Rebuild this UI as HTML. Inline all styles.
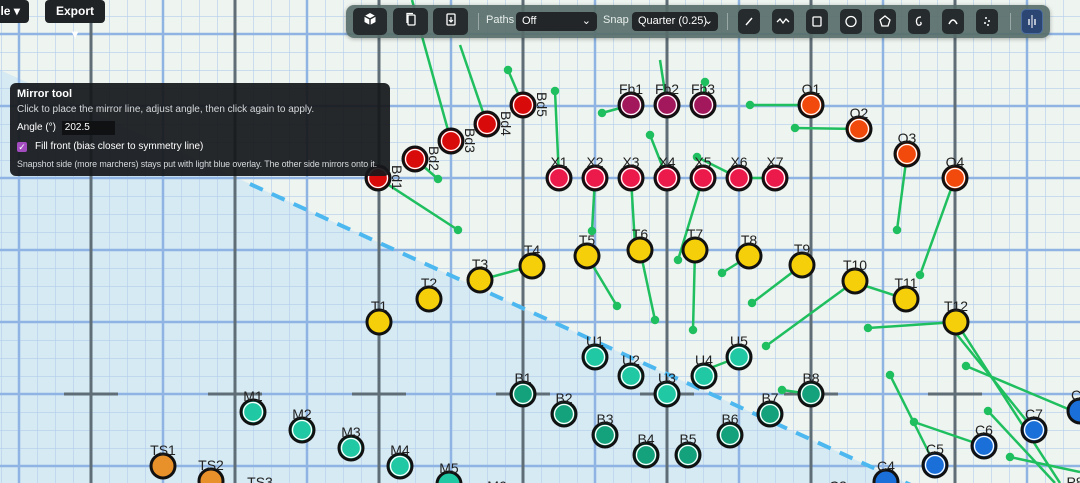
<!DOCTYPE html>
<html style="overflow:hidden"><head><meta charset="utf-8"><style>
*{box-sizing:border-box;margin:0;padding:0}
html,body{width:1080px;height:483px;overflow:hidden}
body{background:#eef4ef;font-family:"Liberation Sans",sans-serif;position:relative}
svg.f{position:absolute;left:0;top:0}
.btn{position:absolute;background:#1f2326;color:#fff;font-size:12px;font-weight:bold;border-radius:4px;height:23px;line-height:23px;padding:0 8px;text-align:center}
.tb{position:absolute;left:346px;top:5px;width:704px;height:33px;background:rgba(88,110,106,0.92);border-radius:8px;box-shadow:0 1px 4px rgba(0,0,0,.3)}
.tb .b{position:absolute;top:3px;height:27px;background:#262b2d;border-radius:5px;color:#fff;font-size:11px;text-align:center;line-height:27px}
.tb .s{position:absolute;top:4px;height:25px;width:22px;background:#262b2d;border-radius:5px}
.tb .sep{position:absolute;top:8px;height:17px;width:1px;background:#9aa8a6}
.tb .t{position:absolute;top:9px;color:#e8eeec;font-size:11px}
.tb .sel{position:absolute;top:7px;height:19px;background:#222628;border-radius:4px;color:#fff;font-size:11px;line-height:19px;padding-left:6px}
.panel{position:absolute;left:10px;top:83px;width:380px;height:93px;background:rgba(22,24,27,0.93);border-radius:6px;color:#fff;padding:5px 7px;overflow:hidden}
</style></head><body>
<svg class="f" width="1080" height="483" viewBox="0 0 1080 483">
<defs>
<pattern id="minor" x="1" y="16" width="18" height="18" patternUnits="userSpaceOnUse"><path d="M0 0H18M0 0V18" stroke="#b3cdec" stroke-width="1.2" fill="none"/></pattern>
</defs>
<rect width="1080" height="483" fill="#eef4ef"/>
<polygon points="0,70 1080,562 0,562" fill="#d6eaf3"/>
<rect width="1080" height="483" fill="url(#minor)"/>
<g stroke="#8fb4e3" stroke-width="2.5">
<path d="M0 34H1080M0 106H1080M0 178H1080M0 250H1080M0 322H1080M0 394H1080M0 466H1080"/>
<path d="M19 0V483M163 0V483M307 0V483M451 0V483M595 0V483M739 0V483M883 0V483M1027 0V483"/>
</g>
<g stroke="#5f6d77" stroke-width="3">
<path d="M91 0V483M235 0V483M379 0V483M523 0V483M667 0V483M811 0V483M955 0V483"/>
<path d="M64 394H118M208 394H262M352 394H406M496 394H550M640 394H694M784 394H838M928 394H982"/>
</g>
<line x1="250" y1="184" x2="1080" y2="562" stroke="#4db8f0" stroke-width="4" stroke-dasharray="14 10"/>
<g stroke="#1fbf5f" stroke-width="2.5" fill="#1fbf5f">
<line x1="378" y1="178" x2="458" y2="230"/><circle cx="458" cy="230" r="3"/>
<line x1="415" y1="159" x2="438" y2="179"/><circle cx="438" cy="179" r="3"/>
<line x1="451" y1="141" x2="412" y2="0"/>
<line x1="487" y1="124" x2="460" y2="45"/>
<line x1="523" y1="105" x2="508" y2="70"/><circle cx="508" cy="70" r="3"/>
<line x1="559" y1="178" x2="555" y2="91"/><circle cx="555" cy="91" r="3"/>
<line x1="631" y1="105" x2="602" y2="113"/><circle cx="602" cy="113" r="3"/>
<line x1="667" y1="105" x2="660" y2="60"/>
<line x1="703" y1="105" x2="705" y2="82"/><circle cx="705" cy="82" r="3"/>
<line x1="667" y1="178" x2="650" y2="135"/><circle cx="650" cy="135" r="3"/>
<line x1="697" y1="157" x2="739" y2="178"/><circle cx="697" cy="157" r="3"/>
<line x1="775" y1="178" x2="744" y2="178"/><circle cx="744" cy="178" r="3"/>
<line x1="595" y1="178" x2="592" y2="231"/><circle cx="592" cy="231" r="3"/>
<line x1="631" y1="178" x2="635" y2="245"/><circle cx="635" cy="245" r="3"/>
<line x1="703" y1="178" x2="678" y2="260"/><circle cx="678" cy="260" r="3"/>
<line x1="811" y1="105" x2="750" y2="105"/><circle cx="750" cy="105" r="3"/>
<line x1="859" y1="129" x2="795" y2="128"/><circle cx="795" cy="128" r="3"/>
<line x1="907" y1="154" x2="897" y2="230"/><circle cx="897" cy="230" r="3"/>
<line x1="955" y1="178" x2="920" y2="275"/><circle cx="920" cy="275" r="3"/>
<line x1="532" y1="266" x2="480" y2="280"/>
<line x1="587" y1="256" x2="617" y2="306"/><circle cx="617" cy="306" r="3"/>
<line x1="640" y1="250" x2="655" y2="320"/><circle cx="655" cy="320" r="3"/>
<line x1="695" y1="250" x2="693" y2="330"/><circle cx="693" cy="330" r="3"/>
<line x1="749" y1="256" x2="722" y2="273"/><circle cx="722" cy="273" r="3"/>
<line x1="802" y1="265" x2="752" y2="303"/><circle cx="752" cy="303" r="3"/>
<line x1="855" y1="281" x2="766" y2="346"/><circle cx="766" cy="346" r="3"/>
<line x1="906" y1="299" x2="847" y2="280"/><circle cx="847" cy="280" r="3"/>
<line x1="956" y1="322" x2="868" y2="328"/><circle cx="868" cy="328" r="3"/>
<line x1="956" y1="322" x2="1060" y2="483"/>
<line x1="946" y1="321" x2="1034" y2="430"/>
<line x1="966" y1="366" x2="1080" y2="414"/><circle cx="966" cy="366" r="3"/>
<line x1="988" y1="411" x2="1055" y2="483"/><circle cx="988" cy="411" r="3"/>
<line x1="1010" y1="457" x2="1080" y2="472"/><circle cx="1010" cy="457" r="3"/>
<line x1="739" y1="357" x2="705" y2="370"/>
<line x1="811" y1="394" x2="782" y2="390"/><circle cx="782" cy="390" r="3"/>
<line x1="935" y1="465" x2="890" y2="375"/><circle cx="890" cy="375" r="3"/>
<line x1="984" y1="446" x2="914" y2="422"/><circle cx="914" cy="422" r="3"/>
</g>
<g stroke="#111" stroke-width="3">
<g fill="#d90a0a"><circle cx="378" cy="178" r="12"/><circle cx="415" cy="159" r="12"/><circle cx="451" cy="141" r="12"/><circle cx="487" cy="124" r="12"/><circle cx="523" cy="105" r="12"/></g>
<g fill="#a3185c"><circle cx="631" cy="105" r="12"/><circle cx="667" cy="105" r="12"/><circle cx="703" cy="105" r="12"/></g>
<g fill="#ec1a4a"><circle cx="559" cy="178" r="12"/><circle cx="595" cy="178" r="12"/><circle cx="631" cy="178" r="12"/><circle cx="667" cy="178" r="12"/><circle cx="703" cy="178" r="12"/><circle cx="739" cy="178" r="12"/><circle cx="775" cy="178" r="12"/></g>
<g fill="#f24a0c"><circle cx="811" cy="105" r="12"/><circle cx="859" cy="129" r="12"/><circle cx="907" cy="154" r="12"/><circle cx="955" cy="178" r="12"/></g>
<g fill="#f5cf0a"><circle cx="379" cy="322" r="12"/><circle cx="429" cy="299" r="12"/><circle cx="480" cy="280" r="12"/><circle cx="532" cy="266" r="12"/><circle cx="587" cy="256" r="12"/><circle cx="640" cy="250" r="12"/><circle cx="695" cy="250" r="12"/><circle cx="749" cy="256" r="12"/><circle cx="802" cy="265" r="12"/><circle cx="855" cy="281" r="12"/><circle cx="906" cy="299" r="12"/><circle cx="956" cy="322" r="12"/></g>
<g fill="#20c8a4"><circle cx="595" cy="357" r="12"/><circle cx="631" cy="376" r="12"/><circle cx="667" cy="394" r="12"/><circle cx="704" cy="376" r="12"/><circle cx="739" cy="357" r="12"/><circle cx="253" cy="412" r="12"/><circle cx="302" cy="430" r="12"/><circle cx="351" cy="448" r="12"/><circle cx="400" cy="466" r="12"/><circle cx="449" cy="484" r="12"/></g>
<g fill="#14a27c"><circle cx="523" cy="394" r="12"/><circle cx="564" cy="414" r="12"/><circle cx="605" cy="435" r="12"/><circle cx="646" cy="455" r="12"/><circle cx="688" cy="455" r="12"/><circle cx="730" cy="435" r="12"/><circle cx="770" cy="414" r="12"/><circle cx="811" cy="394" r="12"/></g>
<g fill="#e8912a"><circle cx="163" cy="466" r="12"/><circle cx="211" cy="481" r="12"/></g>
<g fill="#1a6fd8"><circle cx="886" cy="482" r="12"/><circle cx="935" cy="465" r="12"/><circle cx="984" cy="446" r="12"/><circle cx="1034" cy="430" r="12"/><circle cx="1080" cy="411" r="12"/></g>
</g>
<g fill="none" stroke="#fff" stroke-width="1.3">
<circle cx="378" cy="178" r="9.5"/><circle cx="415" cy="159" r="9.5"/><circle cx="451" cy="141" r="9.5"/><circle cx="487" cy="124" r="9.5"/><circle cx="523" cy="105" r="9.5"/><circle cx="631" cy="105" r="9.5"/><circle cx="667" cy="105" r="9.5"/><circle cx="703" cy="105" r="9.5"/><circle cx="559" cy="178" r="9.5"/><circle cx="595" cy="178" r="9.5"/><circle cx="631" cy="178" r="9.5"/><circle cx="667" cy="178" r="9.5"/><circle cx="703" cy="178" r="9.5"/><circle cx="739" cy="178" r="9.5"/><circle cx="775" cy="178" r="9.5"/><circle cx="811" cy="105" r="9.5"/><circle cx="859" cy="129" r="9.5"/><circle cx="907" cy="154" r="9.5"/><circle cx="955" cy="178" r="9.5"/><circle cx="595" cy="357" r="9.5"/><circle cx="631" cy="376" r="9.5"/><circle cx="667" cy="394" r="9.5"/><circle cx="704" cy="376" r="9.5"/><circle cx="739" cy="357" r="9.5"/><circle cx="253" cy="412" r="9.5"/><circle cx="302" cy="430" r="9.5"/><circle cx="351" cy="448" r="9.5"/><circle cx="400" cy="466" r="9.5"/><circle cx="523" cy="394" r="9.5"/><circle cx="564" cy="414" r="9.5"/><circle cx="605" cy="435" r="9.5"/><circle cx="646" cy="455" r="9.5"/><circle cx="688" cy="455" r="9.5"/><circle cx="730" cy="435" r="9.5"/><circle cx="770" cy="414" r="9.5"/><circle cx="811" cy="394" r="9.5"/><circle cx="935" cy="465" r="9.5"/><circle cx="984" cy="446" r="9.5"/><circle cx="1034" cy="430" r="9.5"/>
</g>
<g font-family="Liberation Sans, sans-serif" font-size="14" fill="#222" text-anchor="middle">
<text x="631" y="94">Fb1</text><text x="667" y="94">Fb2</text><text x="703" y="94">Fb3</text>
<text x="559" y="167">X1</text><text x="595" y="167">X2</text><text x="631" y="167">X3</text><text x="667" y="167">X4</text><text x="703" y="167">X5</text><text x="739" y="167">X6</text><text x="775" y="167">X7</text>
<text x="811" y="94">O1</text><text x="859" y="118">O2</text><text x="907" y="143">O3</text><text x="955" y="167">O4</text>
<text x="379" y="311">T1</text><text x="429" y="288">T2</text><text x="480" y="269">T3</text><text x="532" y="255">T4</text><text x="587" y="245">T5</text><text x="640" y="239">T6</text><text x="695" y="239">T7</text><text x="749" y="245">T8</text><text x="802" y="254">T9</text><text x="855" y="270">T10</text><text x="906" y="288">T11</text><text x="956" y="311">T12</text>
<text x="595" y="346">U1</text><text x="631" y="365">U2</text><text x="667" y="383">U3</text><text x="704" y="365">U4</text><text x="739" y="346">U5</text>
<text x="523" y="383">B1</text><text x="564" y="403">B2</text><text x="605" y="424">B3</text><text x="646" y="444">B4</text><text x="688" y="444">B5</text><text x="730" y="424">B6</text><text x="770" y="403">B7</text><text x="811" y="383">B8</text>
<text x="253" y="401">M1</text><text x="302" y="419">M2</text><text x="351" y="437">M3</text><text x="400" y="455">M4</text><text x="449" y="473">M5</text><text x="497" y="491">M6</text>
<text x="163" y="455">TS1</text><text x="211" y="470">TS2</text><text x="260" y="487">TS3</text>
<text x="838" y="491">C3</text><text x="886" y="471">C4</text><text x="935" y="454">C5</text><text x="984" y="435">C6</text><text x="1034" y="419">C7</text><text x="1080" y="400">C8</text><text x="1075" y="487">P8</text>
</g>
<g font-family="Liberation Sans, sans-serif" font-size="14" fill="#222">
<text transform="translate(392,165) rotate(90)">Bd1</text>
<text transform="translate(429,146) rotate(90)">Bd2</text>
<text transform="translate(465,128) rotate(90)">Bd3</text>
<text transform="translate(501,111) rotate(90)">Bd4</text>
<text transform="translate(537,92) rotate(90)">Bd5</text>
</g>
</svg>

<div class="btn" style="left:-12px;top:0;width:41px">ile ▾</div>
<div class="btn" style="left:45px;top:0;width:60px">Export ▾</div>

<div class="tb">
<div class="b" style="left:7px;width:34px"><svg width="14" height="14" viewBox="0 0 14 14" style="vertical-align:-2px"><path d="M7 1L12.5 4V10L7 13L1.5 10V4Z" fill="#fff"/><path d="M7 7L12.5 4M7 7L1.5 4M7 7V13" stroke="#262b2d" stroke-width="1.4"/></svg></div>
<div class="b" style="left:47px;width:35px"><svg width="14" height="14" viewBox="0 0 14 14" style="vertical-align:-2px"><rect x="4" y="3" width="7" height="10" rx="1" fill="none" stroke="#fff" stroke-width="1.3"/><path d="M3 11V1.5H9" fill="none" stroke="#fff" stroke-width="1.3"/></svg></div>
<div class="b" style="left:87px;width:35px"><svg width="14" height="14" viewBox="0 0 14 14" style="vertical-align:-2px"><rect x="3" y="2" width="8" height="11" rx="1" fill="none" stroke="#fff" stroke-width="1.3"/><path d="M7 5V10M5 8L7 10L9 8" stroke="#fff" stroke-width="1.2" fill="none"/></svg></div>
<div class="sep" style="left:132px"></div>
<div class="t" style="left:140px">Paths</div>
<div class="sel" style="left:170px;width:81px">Off<span style="position:absolute;right:6px">⌄</span></div>
<div class="t" style="left:257px">Snap</div>
<div class="sel" style="left:286px;width:86px">Quarter (0.25)<span style="position:absolute;right:5px">⌄</span></div>
<div class="sep" style="left:381px"></div>
<div class="s" style="left:392px"><svg width="22" height="25"><path d="M8 16L14 9" stroke="#fff" stroke-width="1.4"/></svg></div>
<div class="s" style="left:426px"><svg width="22" height="25"><path d="M5 13L8 10L11 14L14 10L17 13" stroke="#fff" stroke-width="1.3" fill="none"/></svg></div>
<div class="s" style="left:460px"><svg width="22" height="25"><rect x="7" y="8" width="8" height="9" rx="1" stroke="#fff" stroke-width="1.3" fill="none"/></svg></div>
<div class="s" style="left:494px"><svg width="22" height="25"><circle cx="11" cy="12.5" r="5" stroke="#fff" stroke-width="1.3" fill="none"/></svg></div>
<div class="s" style="left:528px"><svg width="22" height="25"><path d="M11 7L16 11L14 17H8L6 11Z" stroke="#fff" stroke-width="1.3" fill="none"/></svg></div>
<div class="s" style="left:562px"><svg width="22" height="25"><path d="M13 8Q8 8 8.5 13Q9 17 12 16Q14 15 12.5 13" stroke="#fff" stroke-width="1.3" fill="none"/></svg></div>
<div class="s" style="left:596px"><svg width="22" height="25"><path d="M7 15Q11 7 15 15" stroke="#fff" stroke-width="1.6" fill="none"/></svg></div>
<div class="s" style="left:630px"><svg width="22" height="25" fill="#fff"><circle cx="10" cy="9" r="1"/><circle cx="13" cy="12" r="1"/><circle cx="9" cy="14" r="1"/><circle cx="12" cy="16" r="1"/></svg></div>
<div class="sep" style="left:664px"></div>
<div class="s" style="left:675px;background:#2b4673;border:1px solid #4a6ca0"><svg width="20" height="23"><path d="M10 5V18" stroke="#fff" stroke-width="1"/><path d="M7 9V15M13 9V15" stroke="#fff" stroke-width="1.3"/></svg></div>
</div>

<div class="panel">
<div style="font-size:11px;font-weight:bold">Mirror tool</div>
<div style="font-size:10px;color:#d6d9dc;margin-top:4px">Click to place the mirror line, adjust angle, then click again to apply.</div>
<div style="font-size:10px;margin-top:6px;height:14px;line-height:14px">Angle (°) <span style="display:inline-block;background:#0f1113;width:53px;padding-left:3px;margin-left:3px">202.5</span></div>
<div style="font-size:10px;margin-top:6px;line-height:12px"><span style="display:inline-block;width:10px;height:10px;background:#a24cc0;border-radius:2px;vertical-align:-1px;margin-right:8px;color:#fff;font-size:9px;line-height:10px;text-align:center">✓</span>Fill front (bias closer to symmetry line)</div>
<div style="font-size:8.9px;color:#d6d9dc;margin-top:6px;white-space:nowrap;letter-spacing:-0.1px">Snapshot side (more marchers) stays put with light blue overlay. The other side mirrors onto it.</div>
</div>
</body></html>
